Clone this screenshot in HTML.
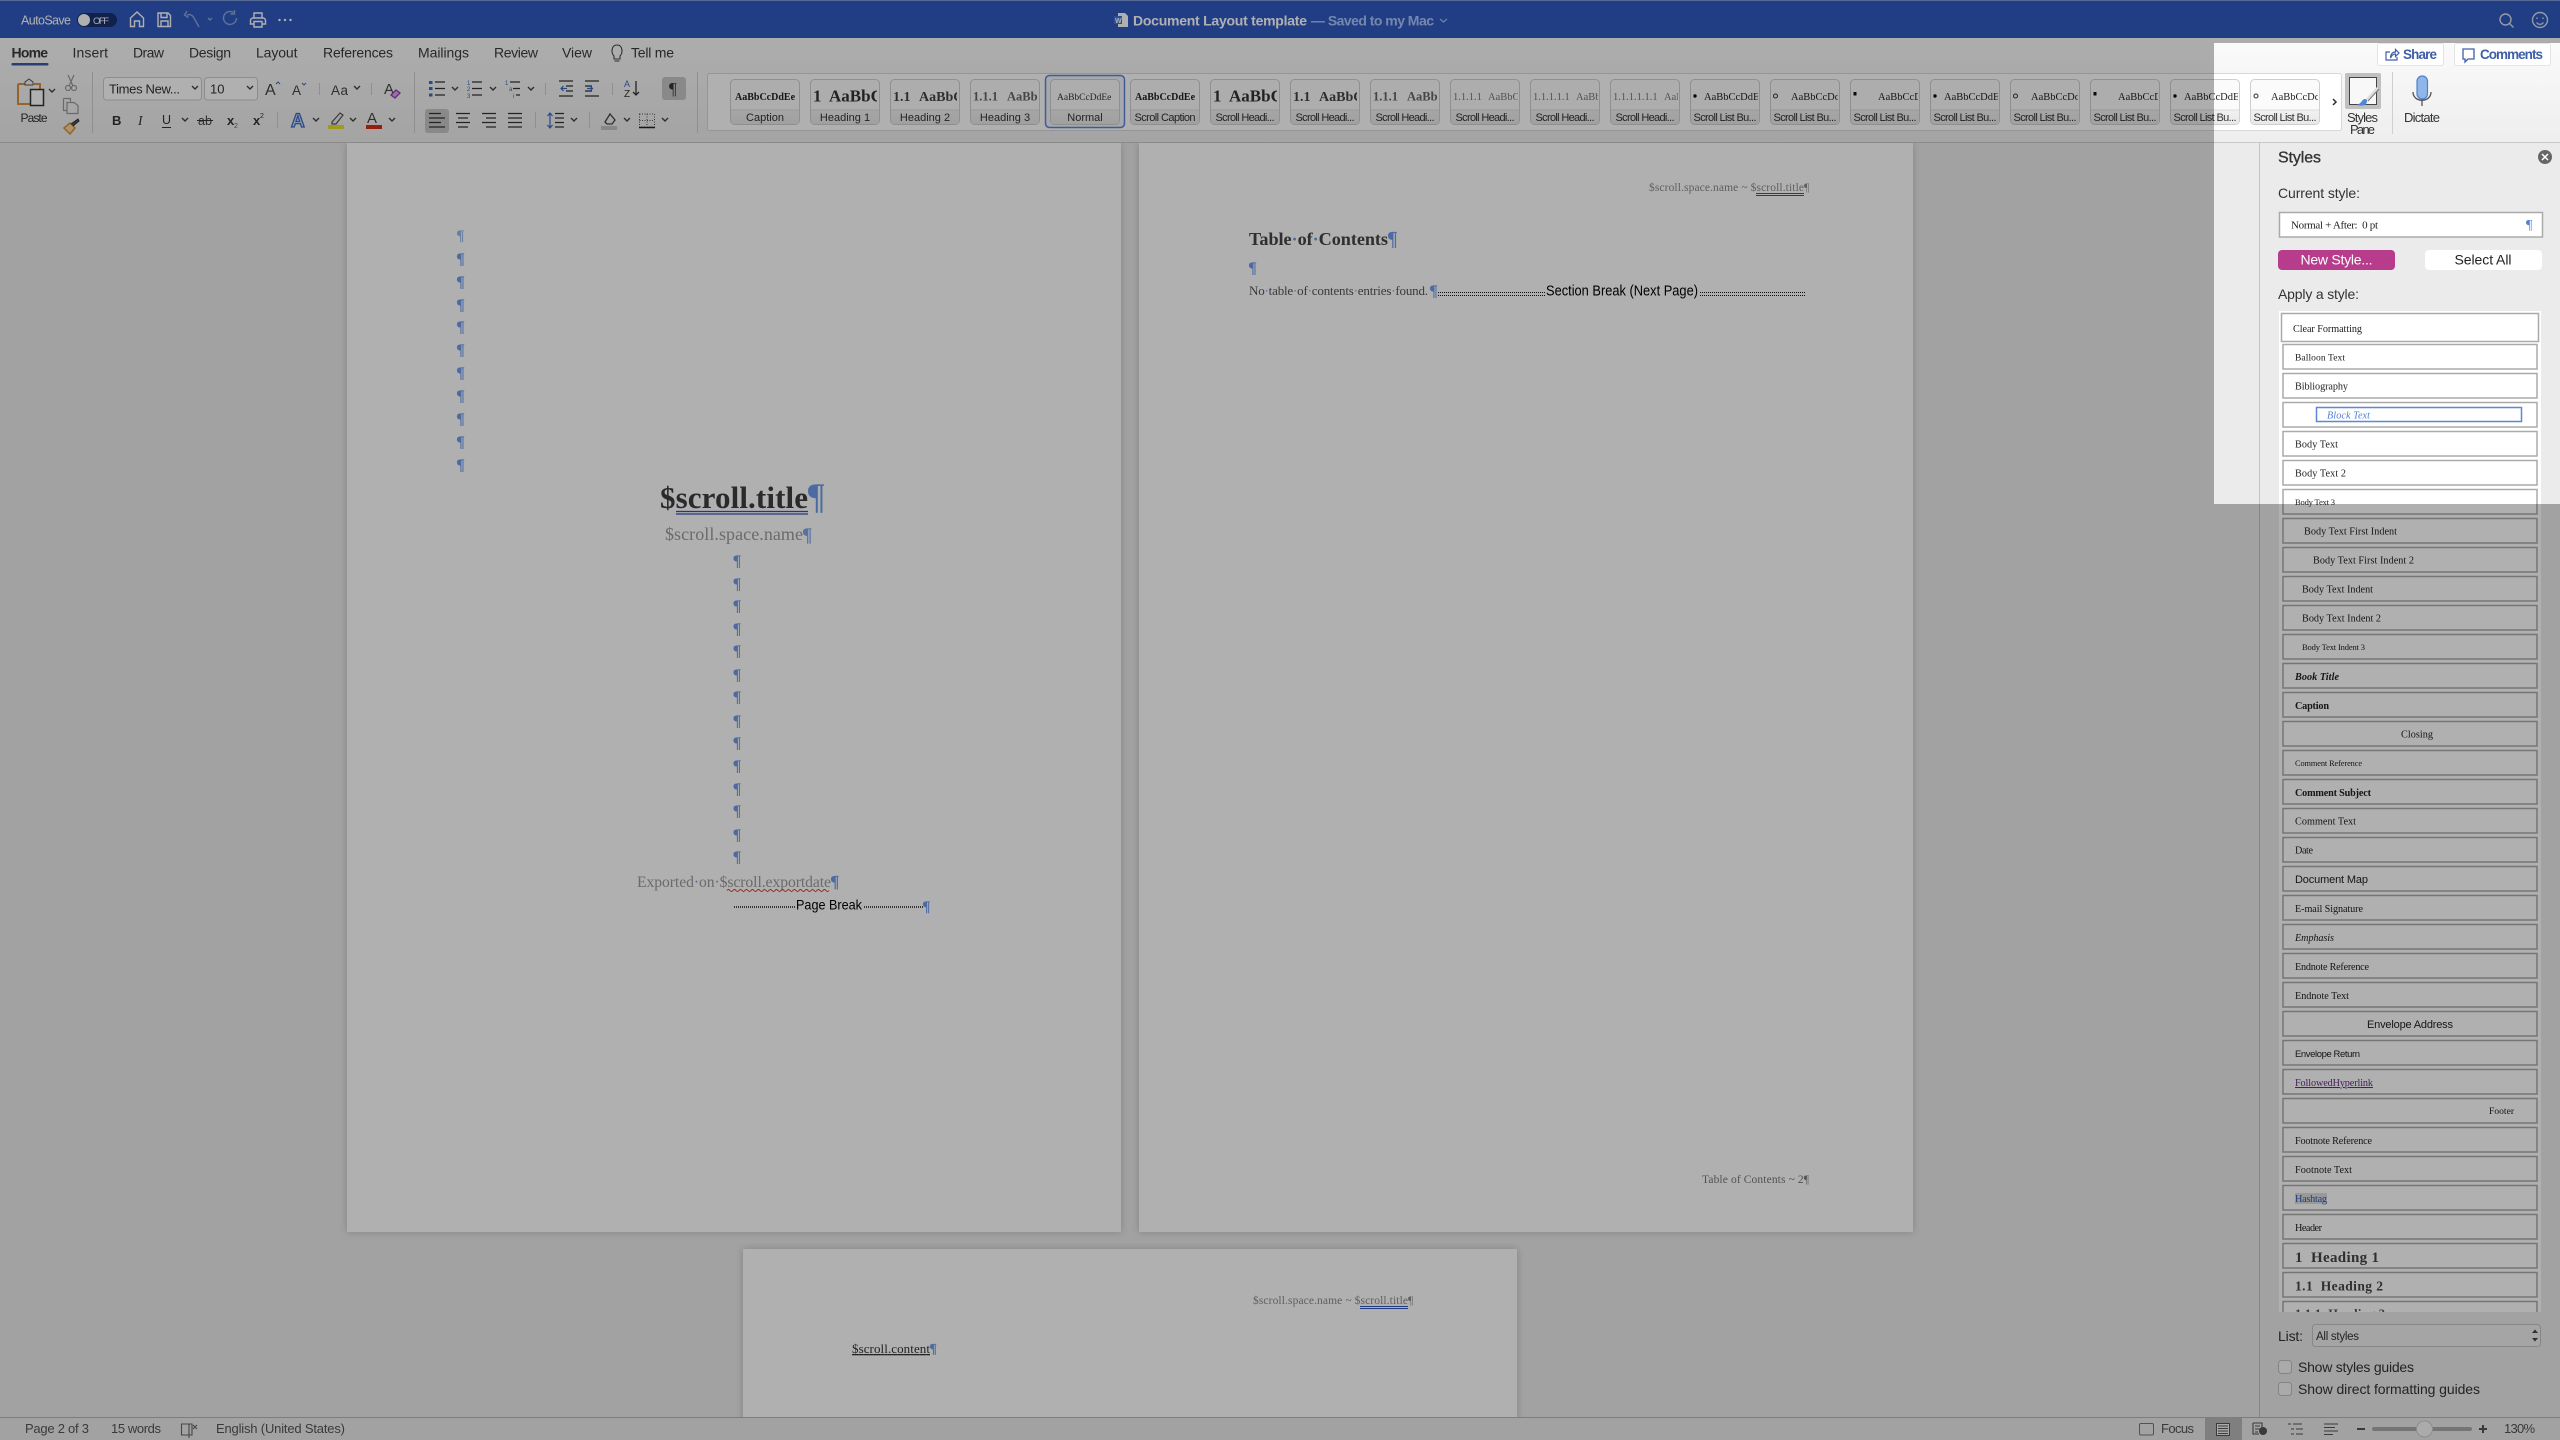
<!DOCTYPE html>
<html lang="en"><head><meta charset="utf-8"><title>Document Layout template</title>
<style>
html,body{margin:0;padding:0;width:2560px;height:1440px;overflow:hidden;background:#ebebeb}
svg{display:block}
text{white-space:pre}
.s{font-family:"Liberation Sans",sans-serif}
.r{font-family:"Liberation Serif",serif}
.rb{font-family:"Liberation Sans",sans-serif;font-size:14px;fill:#3a3a3a}
.l{font-family:"Liberation Sans",sans-serif;font-size:11px;fill:#333;text-anchor:middle}
.p{font-family:"Liberation Serif",serif;font-size:16px;fill:#6f9ceb;stroke:#6f9ceb;stroke-width:.35}
.d{fill:#6f9ceb}
.q{font-family:"Liberation Serif",serif;font-size:10.2px;fill:#222}
.ic{fill:none;stroke:#444;stroke-width:1.4}
.tb{fill:none;stroke:#fff;stroke-width:1.4}
</style></head><body>
<svg xmlns="http://www.w3.org/2000/svg" width="2560" height="1440" viewBox="0 0 2560 1440">
<defs>
<linearGradient id="rib" x1="0" y1="0" x2="0" y2="1"><stop offset="0" stop-color="#fbfbfb"/><stop offset="1" stop-color="#eeeeee"/></linearGradient>
<linearGradient id="tl" x1="0" y1="0" x2="0" y2="1"><stop offset="0" stop-color="#f1f1f1"/><stop offset="1" stop-color="#e8e8e8"/></linearGradient>
<path id="c" d="M-3-2 0 1 3-2" fill="none" stroke="#444" stroke-width="1.4"/>
<g id="tile"><rect x=".5" y="79.5" width="69" height="45" rx="4" fill="#fbfbfb" stroke="#cfcfcf"/><path d="M1 110H69V121a3 3 0 0 1-3 3H4a3 3 0 0 1-3-3Z" fill="url(#tl)"/><path d="M1 110H69" stroke="#dcdcdc"/></g>
<rect id="row" x="2283" width="254" height="24.5" fill="#fff" stroke="#aaa" stroke-width="1.5"/>
<pattern id="dots" width="2" height="2" patternUnits="userSpaceOnUse"><rect width="1" height="2" fill="#111"/></pattern>
<filter id="sh" x="-3%" y="-3%" width="106%" height="106%"><feDropShadow dx="0" dy="0" stdDeviation="4" flood-color="#000" flood-opacity=".2"/></filter>
</defs>

<!-- base -->
<rect width="2560" height="1440" fill="#ebebeb"/>

<!-- pages -->
<rect x="347" y="143" width="774" height="1089" fill="#fff" filter="url(#sh)"/>
<rect x="1139" y="143" width="774" height="1089" fill="#fff" filter="url(#sh)"/>
<rect x="743" y="1249" width="774" height="180" fill="#fff" filter="url(#sh)"/>

<!-- page 1 -->
<g class="p">
<text x="457" y="240" font-size="15" opacity=".7">¶</text><text x="457" y="264">¶</text><text x="457" y="287">¶</text><text x="457" y="310">¶</text><text x="457" y="332">¶</text><text x="457" y="355">¶</text><text x="457" y="378">¶</text><text x="457" y="401">¶</text><text x="457" y="424">¶</text><text x="457" y="447">¶</text><text x="457" y="470">¶</text>
<text x="733.500" y="566">¶</text><text x="733.500" y="589">¶</text><text x="733.500" y="611">¶</text><text x="733.500" y="634">¶</text><text x="733.500" y="656">¶</text><text x="733.500" y="680">¶</text><text x="733.500" y="702">¶</text><text x="733.500" y="726">¶</text><text x="733.500" y="748">¶</text><text x="733.500" y="771">¶</text><text x="733.500" y="794">¶</text><text x="733.500" y="816">¶</text><text x="733.500" y="840">¶</text><text x="733.500" y="862">¶</text>
</g>
<text class="r" x="660" y="508" font-size="31" font-weight="700" fill="#3d3d3d" textLength="148">$scroll.title</text>
<text class="p" x="808" y="508" style="font-size:36px">¶</text>
<path d="M676 511.500H808M676 514H808" stroke="#2f55b5" stroke-width="1.2"/>
<text class="r" x="665" y="540" font-size="18" fill="#9b9b9b" textLength="138">$scroll.space.name</text>
<text class="p" x="803" y="541" style="font-size:19px" opacity=".9">¶</text>
<text class="r" x="637" y="887" font-size="15.700" fill="#9b9b9b" textLength="194">Exported<tspan class="d">·</tspan>on<tspan class="d">·</tspan>$scroll.exportdate</text>
<text class="p" x="831" y="887" style="font-size:17px">¶</text>
<path d="M727 890.500q1.500-2 3 0t3 0 3 0 3 0 3 0 3 0 3 0 3 0 3 0 3 0 3 0 3 0 3 0 3 0 3 0 3 0 3 0 3 0 3 0 3 0 3 0 3 0 3 0 3 0 3 0 3 0 3 0 3 0 3 0 3 0 3 0 3 0 3 0 3 0" fill="none" stroke="#e03a30" stroke-width="1"/>
<rect x="734" y="906" width="61" height="2" fill="url(#dots)" opacity=".75"/>
<text class="s" x="796" y="909.500" font-size="14" fill="#000" textLength="66" lengthAdjust="spacingAndGlyphs">Page Break</text>
<rect x="863" y="906" width="61" height="2" fill="url(#dots)" opacity=".75"/>
<text class="p" x="923" y="911" style="font-size:15px">¶</text>

<!-- page 2 -->
<text class="r" x="1649" y="191" font-size="11.500" fill="#8b8b8b" textLength="155">$scroll.space.name ~ $scroll.title</text>
<text class="r" x="1804" y="191" font-size="11.500" fill="#8b8b8b">¶</text>
<path d="M1756 193.500H1804M1756 195.500H1804" stroke="#2f55b5" stroke-width="1"/>
<text class="r" x="1249" y="245" font-size="18.200" font-weight="700" fill="#444" textLength="139">Table<tspan class="d">·</tspan>of<tspan class="d">·</tspan>Contents</text>
<text class="p" x="1388" y="245" style="font-size:20px">¶</text>
<text class="p" x="1249" y="273">¶</text>
<text class="r" x="1249" y="295" font-size="13" fill="#555" textLength="179">No<tspan class="d">·</tspan>table<tspan class="d">·</tspan>of<tspan class="d">·</tspan>contents<tspan class="d">·</tspan>entries<tspan class="d">·</tspan>found.</text>
<text class="p" x="1430" y="296" style="font-size:16px">¶</text>
<rect x="1438" y="292" width="107" height="1" fill="url(#dots)"/><rect x="1438" y="295" width="107" height="1" fill="url(#dots)"/>
<text class="s" x="1546" y="295.500" font-size="14.500" fill="#000" textLength="152" lengthAdjust="spacingAndGlyphs">Section Break (Next Page)</text>
<rect x="1699" y="292" width="107" height="1" fill="url(#dots)"/><rect x="1699" y="295" width="107" height="1" fill="url(#dots)"/>
<text class="r" x="1702" y="1183" font-size="11.500" fill="#777" textLength="107">Table of Contents ~ 2¶</text>

<!-- page 3 -->
<text class="r" x="1253" y="1304" font-size="11.500" fill="#8b8b8b" textLength="155">$scroll.space.name ~ $scroll.title</text>
<text class="r" x="1408" y="1304" font-size="11.500" fill="#8b8b8b">¶</text>
<path d="M1360 1306.500H1408M1360 1308.500H1408" stroke="#2f55b5" stroke-width="1"/>
<text class="r" x="852" y="1353" font-size="13" fill="#333" textLength="78" text-decoration="underline">$scroll.content</text>
<text class="p" x="930" y="1353" style="font-size:14px">¶</text>

<!-- ribbon -->
<rect y="38" width="2560" height="104" fill="url(#rib)"/>
<path d="M0 142.500H2560" stroke="#c8c8c8"/>

<!-- title bar -->
<rect width="2560" height="38" fill="#315bc1"/>
<rect width="2560" height="1" fill="#7f98d8"/>
<text class="s" x="21" y="24.500" font-size="12.500" fill="#fff" textLength="50">AutoSave</text>
<rect x="77" y="13" width="40" height="14" rx="7" fill="#17306e"/><circle cx="84" cy="20" r="6" fill="#fff"/>
<text class="s" x="93" y="24" font-size="9.500" fill="#fff" textLength="16">OFF</text>
<g class="tb">
<path d="M130.500 26.500V18L137 12l6.500 6v8.500h-4V21h-5v5.500Z"/>
<path d="M158 13h10l2.500 2.500V26.500H158ZM161 13v4.500h6V13M161 26.500V21h7v5.500"/>
<path d="M199 27 194 18c-1.500-3-4-4-7-3M187 11l-2.500 4 4 2.500" opacity=".45"/>
<path d="M208 18l2 2 2-2" opacity=".45"/>
<path d="M236.500 18a6.500 6.500 0 1 1-3-5.500M234.500 10v4h-4" opacity=".45"/>
<path d="M253 18h10a2.500 2.500 0 0 1 2.500 2.500V24H262M254 24h-3.500V20.500A2.500 2.500 0 0 1 253 18M254 18v-5h8v5M254 21.500h8v5.500h-8Z"/>
<path d="M1440 19l3.500 3 3.500-3" stroke="#9db8f0"/>
<circle cx="2505.500" cy="19.500" r="5.500" opacity=".8"/><path d="M2509.500 23.500l4 4" opacity=".8"/>
<circle cx="2540" cy="20" r="7.500" opacity=".8"/><path d="M2536.500 22.500c2 2.500 5 2.500 7 0M2537 17.500v1.500M2543 17.500v1.500" opacity=".8"/>
</g>
<circle cx="279.500" cy="20" r="1.200" fill="#fff"/><circle cx="285" cy="20" r="1.200" fill="#fff"/><circle cx="290.500" cy="20" r="1.200" fill="#fff"/>
<path d="M1118 13h7l3 3v11h-10Z" fill="#fff"/><rect x="1114" y="16" width="8" height="8" fill="#4672d8"/><text class="s" x="1115" y="23" font-size="7" font-weight="700" fill="#fff">W</text>
<text class="s" x="1133" y="25.500" font-size="14" font-weight="700" fill="#fff" textLength="174">Document Layout template</text>
<text class="s" x="1311" y="25.500" font-size="14" font-weight="700" fill="#a9c5fb" textLength="123">— Saved to my Mac</text>

<!-- tabs -->
<g class="rb">
<text x="11.500" y="57.500" font-weight="700" textLength="36.500">Home</text>
<text x="72.500" y="57.500" textLength="35.500">Insert</text>
<text x="133" y="57.500" textLength="31">Draw</text>
<text x="189" y="57.500" textLength="42">Design</text>
<text x="256" y="57.500" textLength="41.500">Layout</text>
<text x="323" y="57.500" textLength="70">References</text>
<text x="418" y="57.500" textLength="51">Mailings</text>
<text x="494" y="57.500" textLength="44">Review</text>
<text x="562" y="57.500" textLength="30">View</text>
<text x="631" y="57.500" textLength="43">Tell me</text>
</g>
<rect x="11.500" y="63" width="37" height="2.500" rx="1" fill="#3b5ba8"/>
<path class="ic" d="M614 56c-3-3-3-11 3-11s6 8 3 11v3h-6ZM614.500 61h5" style="stroke-width:1.100"/>

<!-- clipboard group -->
<path d="M18 84h7M34 84h6v5M18 84v20h12" fill="none" stroke="#d9923a" stroke-width="2"/>
<path d="M25 84v-2l4-3 4 3v3H25Z" fill="#f5f5f5" stroke="#555"/>
<rect x="30.500" y="89.500" width="13" height="16" fill="#fff" stroke="#333" stroke-width="1.500"/>
<use href="#c" x="52" y="91"/>
<text class="s" x="20.500" y="122" font-size="12" fill="#333" textLength="27">Paste</text>
<g fill="none" stroke="#9a9a9a" stroke-width="1.200"><circle cx="68" cy="88" r="2.500"/><circle cx="74" cy="88" r="2.500"/><path d="M69 86l5-11M73 86l-5-11"/>
<path d="M63.500 98.500h7l0 3M63.500 98.500v12h3M67 102.500h7l4 3v8H67Z"/></g>
<path d="M64 128l6-5 5 5-5 6Z" fill="#f8d9a8" stroke="#d9923a" stroke-width="1.500"/><path d="M71 124l7-5 1 2-6 5" fill="#555" stroke="#333"/>
<path d="M92.500 72v61M319.500 83v12M371.500 83v12M277.500 112v16M414.500 72v61M545.500 83v12M612.500 83v12M535.500 112v16M589.500 112v16M697.500 72v61" stroke="#cfcfcf"/>

<!-- font boxes -->
<rect x="103.500" y="77.500" width="98" height="22.500" rx="3" fill="#fff" stroke="#cdcdcd"/>
<rect x="204.500" y="77.500" width="53" height="22.500" rx="3" fill="#fff" stroke="#cdcdcd"/>
<text class="s" x="109" y="93.500" font-size="13" fill="#333" textLength="71">Times New...</text>
<text class="s" x="210" y="93.500" font-size="13" fill="#333">10</text>
<use href="#c" x="195" y="88"/><use href="#c" x="250" y="88"/>
<text class="s" x="265" y="95" font-size="16" fill="#444">A</text><path d="M276 84l2-2 2 2" fill="none" stroke="#3b6cc4"/>
<text class="s" x="292" y="95" font-size="13.500" fill="#444">A</text><path d="M302 83l2 2 2-2" fill="none" stroke="#3b6cc4"/>
<text class="s" x="331" y="95" font-size="13.500" fill="#444" textLength="17">Aa</text><use href="#c" x="357" y="88"/>
<text class="s" x="384" y="94" font-size="15" fill="#444">A</text><path d="M391 95l5-5 4 3-5 5Z" fill="#d8a8e8" stroke="#9a3bb8" stroke-width="1.300"/>

<!-- row 2 -->
<text class="s" x="112" y="125" font-size="13" font-weight="700" fill="#333">B</text>
<text class="r" x="138" y="125" font-size="13.500" font-style="italic" fill="#333">I</text>
<text class="s" x="162" y="124" font-size="12.500" fill="#333">U</text><path d="M162 127.500h9" stroke="#333"/>
<use href="#c" x="185" y="120"/>
<text class="s" x="198" y="125" font-size="12.500" fill="#444" textLength="14">ab</text><path d="M197 120.500h16" stroke="#333"/>
<text class="s" x="227" y="125" font-size="13" font-weight="700" fill="#333">x</text><text class="s" x="234" y="128" font-size="7" fill="#3b6cc4">2</text>
<text class="s" x="253" y="125" font-size="13" font-weight="700" fill="#333">x</text><text class="s" x="260" y="118" font-size="7" fill="#333">2</text>
<text class="s" x="291" y="127" font-size="19" font-weight="700" fill="#d5e3fb" stroke="#3b6cc4" stroke-width="1.300" textLength="15">A</text><use href="#c" x="316" y="120"/>
<path d="M332 122l8-9 3 2-7 9h-4Z" fill="#eee" stroke="#555" stroke-width="1.200"/><rect x="328" y="125" width="16" height="4" fill="#e8e02a"/><use href="#c" x="353" y="120"/>
<text class="s" x="367" y="123" font-size="15" fill="#444">A</text><rect x="366" y="125" width="16" height="4" fill="#dc2a12"/><use href="#c" x="392" y="120"/>

<!-- lists -->
<g stroke="#333" stroke-width="1.300" fill="none">
<path d="M435 82h10M435 88.500h10M435 95h10"/><path d="M472 82h10M472 88.500h10M472 95h10"/><path d="M510 82h10M513 88.500h7M516 95h4"/>
<path d="M559 81h14M566 86h7M566 91h7M559 96h14"/><path d="M585 81h14M585 86h7M585 91h7M585 96h14"/>
<path d="M636 81v14M633 92l3 3 3-3"/>
<path d="M456 113.500h14M458 118h10M456 122.500h14M458 127h10"/><path d="M482 113.500h14M486 118h10M482 122.500h14M486 127h10"/><path d="M508 113.500h14M508 118h14M508 122.500h14M508 127h14"/>
<path d="M555 113.500h9M555 118h9M555 122.500h9M555 127h9"/>
</g>
<rect x="425" y="109" width="24" height="24" rx="3" fill="#c7c7c7"/>
<path d="M429 113.500h12M429 118h16M429 122.500h12M429 127h16" stroke="#333" stroke-width="1.300"/>
<rect x="429" y="81" width="3.500" height="3" fill="#3b6cc4"/><rect x="429" y="87" width="3.500" height="3" fill="#3b6cc4"/><rect x="429" y="93.500" width="3.500" height="3" fill="#3b6cc4"/>
<text class="s" x="467" y="85" font-size="6" fill="#3b6cc4">1</text><text class="s" x="467" y="91" font-size="6" fill="#3b6cc4">2</text><text class="s" x="467" y="98" font-size="6" fill="#3b6cc4">3</text>
<text class="s" x="505" y="85" font-size="6" fill="#3b6cc4">1</text><text class="s" x="509" y="91" font-size="6" fill="#3b6cc4">a</text><text class="s" x="513" y="98" font-size="6" fill="#3b6cc4">i</text>
<use href="#c" x="455" y="89"/><use href="#c" x="493" y="89"/><use href="#c" x="531" y="89"/>
<path d="M567 88.500h-6M563.500 86l-2.500 2.500 2.500 2.500M587 88.500h5M590 86l2.500 2.500-2.500 2.500" fill="none" stroke="#3b6cc4" stroke-width="1.200"/>
<text class="s" x="624" y="87" font-size="9" fill="#3b6cc4">A</text><text class="s" x="624" y="97" font-size="10" fill="#333">Z</text>
<rect x="662" y="77" width="24" height="23" rx="3" fill="#c7c7c7"/><text class="r" x="669" y="94" font-size="17" fill="#333">¶</text>
<path d="M550 113v15M547.500 116l2.500-3 2.500 3M547.500 125l2.500 3 2.500-3" fill="none" stroke="#3b6cc4" stroke-width="1.200"/>
<use href="#c" x="574" y="120"/>
<path d="M605 122l5-8 5 6-3 4h-5Z" fill="none" stroke="#444" stroke-width="1.300"/><rect x="601" y="126" width="16" height="4" fill="#c4c4c4"/><use href="#c" x="627" y="120"/>
<path d="M639.500 114h15v13h-15ZM647 114v13M639.500 120.500h15" fill="none" stroke="#555" stroke-dasharray="1 1.500"/><path d="M639 127.500h16" stroke="#222" stroke-width="1.500"/><use href="#c" x="665" y="120"/>

<!-- style gallery -->
<rect x="707.500" y="73.500" width="1634" height="57" rx="2" fill="#fff" stroke="#d8d8d8"/>
<rect x="1045.500" y="75.500" width="79" height="52" rx="4" fill="#f0f3fa" stroke="#5f86d8" stroke-width="1.500"/>
<use href="#tile" x="730"/><use href="#tile" x="810"/><use href="#tile" x="890"/><use href="#tile" x="970"/><use href="#tile" x="1050"/><use href="#tile" x="1130"/><use href="#tile" x="1210"/><use href="#tile" x="1290"/><use href="#tile" x="1370"/><use href="#tile" x="1450"/><use href="#tile" x="1530"/><use href="#tile" x="1610"/><use href="#tile" x="1690"/><use href="#tile" x="1770"/><use href="#tile" x="1850"/><use href="#tile" x="1930"/><use href="#tile" x="2010"/><use href="#tile" x="2090"/><use href="#tile" x="2170"/><use href="#tile" x="2250"/>
<g class="l">
<text x="765" y="121">Caption</text><text x="845" y="121">Heading 1</text><text x="925" y="121">Heading 2</text><text x="1005" y="121">Heading 3</text><text x="1085" y="121">Normal</text><text x="1165" y="121" textLength="61">Scroll Caption</text>
<text x="1245" y="121" textLength="59">Scroll Headi...</text><text x="1325" y="121" textLength="59">Scroll Headi...</text><text x="1405" y="121" textLength="59">Scroll Headi...</text><text x="1485" y="121" textLength="59">Scroll Headi...</text><text x="1565" y="121" textLength="59">Scroll Headi...</text><text x="1645" y="121" textLength="59">Scroll Headi...</text>
<text x="1725" y="121" textLength="63">Scroll List Bu...</text><text x="1805" y="121" textLength="63">Scroll List Bu...</text><text x="1885" y="121" textLength="63">Scroll List Bu...</text><text x="1965" y="121" textLength="63">Scroll List Bu...</text><text x="2045" y="121" textLength="63">Scroll List Bu...</text><text x="2125" y="121" textLength="63">Scroll List Bu...</text><text x="2205" y="121" textLength="63">Scroll List Bu...</text><text x="2285" y="121" textLength="63">Scroll List Bu...</text>
</g>
<g class="r" fill="#222">
<text x="735" y="100" font-size="10" font-weight="700">AaBbCcDdEe</text>
<svg x="812" y="80" width="65" height="30"><text x="1" y="21.500" font-size="17" font-weight="700" fill="#333">1</text><text x="17" y="21.500" font-size="17" font-weight="700" fill="#333">AaBbC</text></svg>
<svg x="892" y="80" width="65" height="30"><text x="1" y="21" font-size="14" font-weight="700" fill="#444">1.1</text><text x="27" y="21" font-size="14" font-weight="700" fill="#444">AaBbC</text></svg>
<svg x="972" y="80" width="66" height="30"><text x="1" y="20.500" font-size="12.500" font-weight="700" fill="#666">1.1.1</text><text x="35" y="20.500" font-size="12.500" font-weight="700" fill="#666">AaBb</text></svg>
<text x="1057" y="100" font-size="9.500" fill="#333">AaBbCcDdEe</text>
<text x="1135" y="100" font-size="10" font-weight="700">AaBbCcDdEe</text>
<svg x="1212" y="80" width="65" height="30"><text x="1" y="21.500" font-size="17" font-weight="700" fill="#333">1</text><text x="17" y="21.500" font-size="17" font-weight="700" fill="#333">AaBbC</text></svg>
<svg x="1292" y="80" width="65" height="30"><text x="1" y="21" font-size="14" font-weight="700" fill="#444">1.1</text><text x="27" y="21" font-size="14" font-weight="700" fill="#444">AaBbC</text></svg>
<svg x="1372" y="80" width="66" height="30"><text x="1" y="20.500" font-size="12.500" font-weight="700" fill="#666">1.1.1</text><text x="35" y="20.500" font-size="12.500" font-weight="700" fill="#666">AaBb</text></svg>
<svg x="1452" y="80" width="66" height="30"><text x="1" y="20" font-size="10.500" fill="#777">1.1.1.1</text><text x="36" y="20" font-size="10.500" fill="#777">AaBbC</text></svg>
<svg x="1532" y="80" width="66" height="30"><text x="1" y="20" font-size="10.500" fill="#777">1.1.1.1.1</text><text x="44" y="20" font-size="10.500" fill="#777">AaBb</text></svg>
<svg x="1612" y="80" width="66" height="30"><text x="1" y="20" font-size="10.500" fill="#777">1.1.1.1.1.1</text><text x="52" y="20" font-size="10.500" fill="#777">AaBb</text></svg>
<svg x="1692" y="80" width="66" height="30"><circle cx="3" cy="16" r="1.700" fill="#111"/><text x="12" y="20" font-size="10.500">AaBbCcDdEe</text></svg>
<svg x="1772" y="80" width="66" height="30"><circle cx="3.500" cy="16" r="2" fill="none" stroke="#333"/><text x="19" y="20" font-size="10.500">AaBbCcDdEe</text></svg>
<svg x="1852" y="80" width="66" height="30"><rect x="1.500" y="12" width="3" height="3.500" fill="#111"/><text x="26" y="20" font-size="10.500">AaBbCcDdEe</text></svg>
<svg x="1932" y="80" width="66" height="30"><circle cx="3" cy="16" r="1.700" fill="#111"/><text x="12" y="20" font-size="10.500">AaBbCcDdEe</text></svg>
<svg x="2012" y="80" width="66" height="30"><circle cx="3.500" cy="16" r="2" fill="none" stroke="#333"/><text x="19" y="20" font-size="10.500">AaBbCcDdEe</text></svg>
<svg x="2092" y="80" width="66" height="30"><rect x="1.500" y="12" width="3" height="3.500" fill="#111"/><text x="26" y="20" font-size="10.500">AaBbCcDdEe</text></svg>
<svg x="2172" y="80" width="66" height="30"><circle cx="3" cy="16" r="1.700" fill="#111"/><text x="12" y="20" font-size="10.500">AaBbCcDdEe</text></svg>
<svg x="2252" y="80" width="66" height="30"><circle cx="4" cy="16" r="2" fill="none" stroke="#333"/><text x="19" y="20" font-size="10.500">AaBbCcDdEe</text></svg>
</g>
<path d="M2333 99l3 3-3 3" fill="none" stroke="#333" stroke-width="1.500"/>

<!-- styles pane button, dictate -->
<rect x="2345" y="73" width="36" height="36" rx="2" fill="#c0c0c0"/>
<rect x="2349.500" y="77.500" width="27" height="27" fill="#f8f8f8" stroke="#444"/>
<path d="M2378 88l-11 12" stroke="#ddd" stroke-width="3"/><path d="M2378 88l-11 12" stroke="#777" stroke-width="1" transform="translate(1 1)"/>
<path d="M2357 105c3 1 8 1 9-1 2-3 1-5-1-5-3 0-3 4-8 6Z" fill="#4f86d8"/>
<text class="s" x="2347" y="122" font-size="13" fill="#333" textLength="31">Styles</text>
<text class="s" x="2350" y="134" font-size="13" fill="#333" textLength="25">Pane</text>
<path d="M2392.500 72v62" stroke="#cfcfcf"/>
<rect x="2417" y="76" width="10.500" height="23" rx="5.200" fill="#8fb6ea" stroke="#4f80cc" stroke-width="1.200"/>
<path d="M2413 92c0 11 18 11 18 0M2422 100v6" fill="none" stroke="#555" stroke-width="1.300"/>
<text class="s" x="2404" y="122" font-size="13" fill="#333" textLength="36">Dictate</text>

<!-- share/comments -->
<rect x="2377.500" y="43.500" width="66" height="22" rx="2" fill="#fff" stroke="#e4e4e4"/>
<rect x="2454.500" y="43.500" width="96" height="22" rx="2" fill="#fff" stroke="#e4e4e4"/>
<path d="M2390 52h-4v8h11v-3M2390.500 58c0-4 2-6 5-6v-2.500l3.500 3.500-3.500 3.500V54c-2 0-4 1.500-5 4Z" fill="none" stroke="#3e5fa8" stroke-width="1.200"/>
<text class="s" x="2403" y="59" font-size="13.500" font-weight="700" fill="#3e5fa8" textLength="34">Share</text>
<path d="M2463 49h11v10h-6l-3 3v-3h-2Z" fill="none" stroke="#3e5fa8" stroke-width="1.300"/>
<text class="s" x="2480" y="59" font-size="13.500" font-weight="700" fill="#3e5fa8" textLength="63">Comments</text>

<!-- styles pane -->
<rect x="2259" y="143" width="301" height="1274" fill="#ebebeb"/>
<path d="M2259.500 143V1417" stroke="#c2c2c2"/>
<text class="s" x="2278" y="162.500" font-size="16" fill="#333" stroke="#333" stroke-width=".3" textLength="43">Styles</text>
<circle cx="2545" cy="157" r="7" fill="#666"/><path d="M2542 154l6 6M2548 154l-6 6" stroke="#fff" stroke-width="1.500"/>
<text class="s" x="2278" y="198" font-size="14" fill="#333" textLength="82">Current style:</text>
<rect x="2279.500" y="212.500" width="263" height="24.500" fill="#fff" stroke="#aaa" stroke-width="1.500"/>
<text class="r" x="2291" y="228.500" font-size="11" fill="#222" textLength="87">Normal + After:  0 pt</text>
<text class="r" x="2526" y="229" font-size="14" fill="#4f7fd8">¶</text>
<rect x="2278" y="250" width="117" height="20" rx="4" fill="#b83c8c"/>
<text class="s" x="2336.500" y="264.500" font-size="14" fill="#fff" text-anchor="middle" textLength="72">New Style...</text>
<rect x="2425" y="250" width="117" height="20" rx="4" fill="#fff"/>
<text class="s" x="2483" y="264.500" font-size="14" fill="#222" text-anchor="middle" textLength="57">Select All</text>
<text class="s" x="2278" y="299" font-size="14" fill="#333" textLength="81">Apply a style:</text>

<svg x="2279" y="311" width="262" height="1001" viewBox="2279 311 262 1001">
<rect x="2279" y="311" width="262" height="1001" fill="#fff"/>
<rect x="2281.500" y="313.500" width="257" height="28" fill="#fff" stroke="#aaa" stroke-width="1.500"/>
<use href="#row" y="344.500"/><use href="#row" y="373.500"/><use href="#row" y="402.500"/><use href="#row" y="431.500"/><use href="#row" y="460.500"/><use href="#row" y="489.500"/><use href="#row" y="518.500"/><use href="#row" y="547.500"/><use href="#row" y="576.500"/><use href="#row" y="605.500"/><use href="#row" y="634.500"/><use href="#row" y="663.500"/><use href="#row" y="692.500"/><use href="#row" y="721.500"/><use href="#row" y="750.500"/><use href="#row" y="779.500"/><use href="#row" y="808.500"/><use href="#row" y="837.500"/><use href="#row" y="866.500"/><use href="#row" y="895.500"/><use href="#row" y="924.500"/><use href="#row" y="953.500"/><use href="#row" y="982.500"/><use href="#row" y="1011.500"/><use href="#row" y="1040.500"/><use href="#row" y="1069.500"/><use href="#row" y="1098.500"/><use href="#row" y="1127.500"/><use href="#row" y="1156.500"/><use href="#row" y="1185.500"/><use href="#row" y="1214.500"/><use href="#row" y="1243.500"/><use href="#row" y="1272.500"/><use href="#row" y="1301.500"/>
<rect x="2316.500" y="407.500" width="205" height="14" fill="#fff" stroke="#5f86d8" stroke-width="1.500"/>
<rect x="2295" y="1193" width="32" height="11" fill="#dedede"/>
<g class="q">
<text x="2293" y="332" textLength="69">Clear Formatting</text>
<text x="2295" y="360.500" font-size="9.500" textLength="50">Balloon Text</text>
<text x="2295" y="389.500" textLength="53">Bibliography</text>
<text x="2327" y="418.500" font-style="italic" style="fill:#4f7fd8" textLength="43">Block Text</text>
<text x="2295" y="447.500" textLength="43">Body Text</text>
<text x="2295" y="476.500" textLength="51">Body Text 2</text>
<text x="2295" y="505" style="font-size:8.500px" textLength="40">Body Text 3</text>
<text x="2304" y="534.500" textLength="93">Body Text First Indent</text>
<text x="2313" y="563.500" textLength="101">Body Text First Indent 2</text>
<text x="2302" y="592.500" textLength="71">Body Text Indent</text>
<text x="2302" y="621.500" textLength="79">Body Text Indent 2</text>
<text x="2302" y="650" style="font-size:8.500px" textLength="63">Body Text Indent 3</text>
<text x="2295" y="680" font-weight="700" font-style="italic" textLength="44">Book Title</text>
<text x="2295" y="709" font-weight="700" textLength="34">Caption</text>
<text x="2401" y="737.500" textLength="32">Closing</text>
<text x="2295" y="766" style="font-size:8.300px" textLength="67">Comment Reference</text>
<text x="2295" y="796" font-weight="700" textLength="76">Comment Subject</text>
<text x="2295" y="824.500" textLength="61">Comment Text</text>
<text x="2295" y="853.500" textLength="18">Date</text>
<text class="s" x="2295" y="883" style="font-size:11px" textLength="73">Document Map</text>
<text x="2295" y="912" textLength="68">E-mail Signature</text>
<text x="2295" y="941" font-style="italic" textLength="39">Emphasis</text>
<text x="2295" y="970" textLength="74">Endnote Reference</text>
<text x="2295" y="999" textLength="54">Endnote Text</text>
<text class="s" x="2367" y="1028" style="font-size:11px" textLength="86">Envelope Address</text>
<text class="s" x="2295" y="1057" style="font-size:9.500px" textLength="65">Envelope Return</text>
<text x="2295" y="1086" style="fill:#6a2a8c" text-decoration="underline" textLength="78">FollowedHyperlink</text>
<text x="2489" y="1114" style="font-size:9.500px" textLength="25">Footer</text>
<text x="2295" y="1144" textLength="77">Footnote Reference</text>
<text x="2295" y="1173" textLength="57">Footnote Text</text>
<text x="2295" y="1202" style="fill:#2f55b5" textLength="32">Hashtag</text>
<text x="2295" y="1231" textLength="27">Header</text>
<text x="2295" y="1262" style="font-size:15px;fill:#444" font-weight="700" textLength="84">1  Heading 1</text>
<text x="2295" y="1290.500" style="font-size:13.500px;fill:#444" font-weight="700" textLength="88">1.1  Heading 2</text>
<text x="2295" y="1318" style="font-size:12.500px;fill:#555" font-weight="700" textLength="90">1.1.1  Heading 3</text>
</g>
</svg>

<text class="s" x="2278" y="1341" font-size="14" fill="#333" textLength="25">List:</text>
<rect x="2312.500" y="1324.500" width="228" height="22" rx="3" fill="#f0f0f0" stroke="#c4c4c4"/>
<text class="s" x="2316" y="1340" font-size="11.500" fill="#333" textLength="43">All styles</text>
<path d="M2532 1333l3-3.500 3 3.500ZM2532 1338l3 3.500 3-3.500Z" fill="#444"/>
<rect x="2278.500" y="1360.500" width="13" height="13" rx="3" fill="#f6f6f6" stroke="#c0c0c0"/>
<text class="s" x="2298" y="1372" font-size="14" fill="#333" textLength="116">Show styles guides</text>
<rect x="2278.500" y="1382.500" width="13" height="13" rx="3" fill="#f6f6f6" stroke="#c0c0c0"/>
<text class="s" x="2298" y="1394" font-size="14" fill="#333" textLength="182">Show direct formatting guides</text>

<!-- status bar -->
<rect y="1417" width="2560" height="23" fill="#ebebeb"/>
<path d="M0 1417.500H2560" stroke="#b6b6b6"/>
<g class="s" font-size="13" fill="#555">
<text x="25" y="1433" textLength="64">Page 2 of 3</text>
<text x="111" y="1433" textLength="50">15 words</text>
<text x="216" y="1433" textLength="129">English (United States)</text>
<text x="2161" y="1433" textLength="33">Focus</text>
<text x="2504" y="1433" textLength="31">130%</text>
</g>
<path d="M189 1424h-7.500v11h7.500M189 1424h3v11h-3ZM189 1424v14M193 1425l4 4M197 1425l-4 4" fill="none" stroke="#666" stroke-width="1.100"/>
<rect x="2139.500" y="1423.500" width="14" height="11.500" rx="1.500" fill="none" stroke="#777"/>
<rect x="2205" y="1418" width="37" height="22" fill="#b8b8b8"/>
<rect x="2216.500" y="1423.500" width="13" height="12" fill="#f3f3f3" stroke="#555"/>
<path d="M2218 1426h10M2218 1428.500h10M2218 1431h10M2218 1433.500h10" stroke="#555"/>
<path d="M2253 1423h9v7M2253 1423v11h6M2255 1426h5M2255 1429h5M2255 1432h3" fill="none" stroke="#555" stroke-width="1.100"/>
<circle cx="2263" cy="1431" r="4" fill="#555"/>
<path d="M2288 1424h3M2293 1424h9M2291 1429h3M2296 1429h7M2291 1434h3M2296 1434h7M2324 1424h14M2324 1427.500h11M2324 1431h14M2324 1434.500h9" stroke="#555" stroke-width="1.100"/>
<path d="M2357 1429h8" stroke="#555" stroke-width="2"/>
<path d="M2479 1429h8M2483 1425v8" stroke="#555" stroke-width="2"/>
<rect x="2372" y="1427" width="100" height="4" rx="2" fill="#aaa"/>
<circle cx="2424.500" cy="1429" r="8" fill="#f8f8f8" stroke="#ccc"/>

<!-- dim overlay, leaves the bright spotlight -->
<g fill="#000" fill-opacity=".31">
<rect x="0" y="0" width="2560" height="43"/>
<rect x="0" y="43" width="2214" height="461"/>
<rect x="0" y="504" width="2560" height="936"/>
</g>
</svg>
</body></html>
